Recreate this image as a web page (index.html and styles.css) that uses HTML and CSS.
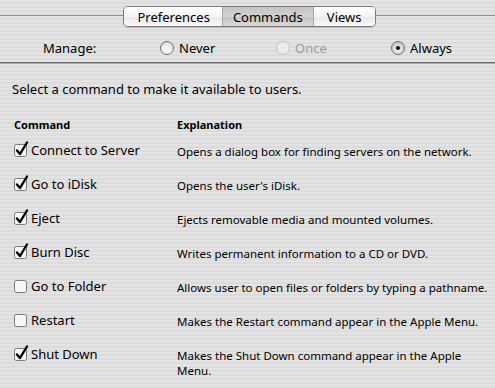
FILE: index.html
```html
<!DOCTYPE html>
<html lang="en">
<head>
    <meta charset="UTF-8">
    <title>Commands</title>
    <link rel="stylesheet" href="styles.css">
</head>
<body>
    <div class="top">
        <div class="tabs">
            <span class="tab">Preferences</span>
            <span class="tab on">Commands</span>
            <span class="tab">Views</span>
        </div>
    </div>
    <div class="manage">
        <span class="lbl">Manage:</span>
        <span class="radio r1"><i class="dot"></i>Never</span>
        <span class="radio r2 off"><i class="dot"></i>Once</span>
        <span class="radio r3 sel"><i class="dot"></i>Always</span>
    </div>
    <div class="sep"></div>

    <p class="intro">Select a command to make it available to users.</p>

    <div class="list">
        <div class="head"><span>Command</span><span>Explanation</span></div>

        <div class="row"><label class="cmd"><svg class="cb" viewBox="0 0 16 16"><rect x="1.5" y="3.5" width="12" height="12" rx="2"/><path class="ck" d="M4 9.5 L7 13 L14 1.5"/></svg>Connect to Server</label><span class="exp">Opens a dialog box for finding servers on the network.</span></div>
        <div class="row"><label class="cmd"><svg class="cb" viewBox="0 0 16 16"><rect x="1.5" y="3.5" width="12" height="12" rx="2"/><path class="ck" d="M4 9.5 L7 13 L14 1.5"/></svg>Go to iDisk</label><span class="exp">Opens the user's iDisk.</span></div>
        <div class="row"><label class="cmd"><svg class="cb" viewBox="0 0 16 16"><rect x="1.5" y="3.5" width="12" height="12" rx="2"/><path class="ck" d="M4 9.5 L7 13 L14 1.5"/></svg>Eject</label><span class="exp">Ejects removable media and mounted volumes.</span></div>
        <div class="row"><label class="cmd"><svg class="cb" viewBox="0 0 16 16"><rect x="1.5" y="3.5" width="12" height="12" rx="2"/><path class="ck" d="M4 9.5 L7 13 L14 1.5"/></svg>Burn Disc</label><span class="exp">Writes permanent information to a CD or DVD.</span></div>
        <div class="row"><label class="cmd"><svg class="cb" viewBox="0 0 16 16"><rect x="1.5" y="3.5" width="12" height="12" rx="2"/></svg>Go to Folder</label><span class="exp">Allows user to open files or folders by typing a pathname.</span></div>
        <div class="row"><label class="cmd"><svg class="cb" viewBox="0 0 16 16"><rect x="1.5" y="3.5" width="12" height="12" rx="2"/></svg>Restart</label><span class="exp">Makes the Restart command appear in the Apple Menu.</span></div>
        <div class="row"><label class="cmd"><svg class="cb" viewBox="0 0 16 16"><rect x="1.5" y="3.5" width="12" height="12" rx="2"/><path class="ck" d="M4 9.5 L7 13 L14 1.5"/></svg>Shut Down</label><span class="exp">Makes the Shut Down command appear in the Apple Menu.</span></div>
    </div>
</body>
</html>
```

FILE: styles.css
```css
*{
    box-sizing: border-box;
}
body{
    margin: 0;
    width: 495px;
    height: 388px;
    overflow: hidden;
    font-family: "Noto Sans", "DejaVu Sans", sans-serif;
    color: #000;
    background-color: #e1e1e1;
    background-image: repeating-linear-gradient(#e3e3e3 0, #e3e3e3 2px, #dcdcdc 2px, #dcdcdc 4px);
}
.top{
    position: relative;
    height: 33px;
    display: flex;
    justify-content: center;
    padding-top: 6px;
}
.top:before{
    content: "";
    position: absolute;
    left: 0;
    right: 0;
    top: 15px;
    border-top: 1px solid #8e8e8e;
}
.tabs{
    position: relative;
    display: flex;
    height: 21px;
    margin-left: 4px;
    border: 1px solid #7b7b7b;
    border-radius: 5px;
    overflow: hidden;
    box-shadow: 0 1px 1px rgba(0,0,0,0.15);
}
.tab{
    display: flex;
    align-items: center;
    justify-content: center;
    font-size: 13px;
    padding: 0 13px;
    background: linear-gradient(#ffffff, #f4f4f4 50%, #e8e8e8 51%, #f8f8f8);
    border-left: 1px solid #a8a8a8;
}
.tab:first-child{
    border-left: 0;
    padding: 0 12px 0 13px;
}
.tab.on{
    background: linear-gradient(#c4c4c4, #d2d2d2 50%, #c2c2c2 51%, #dadada);
    padding: 0 10px;
}
.manage{
    position: relative;
    height: 30px;
    font-size: 13px;
}
.lbl, .radio{
    position: absolute;
    top: 6px;
    display: flex;
    align-items: center;
}
.lbl{ left: 43px; }
.r1{ left: 160px; }
.r2{ left: 276px; color: #9a9a9a; }
.r3{ left: 391px; }
.dot{
    width: 14px;
    height: 14px;
    margin-right: 5px;
    border-radius: 50%;
    border: 1px solid #6f6f6f;
    background: radial-gradient(circle at 50% 70%, #ffffff, #e6e6e6 60%, #bdbdbd);
    display: flex;
    align-items: center;
    justify-content: center;
}
.off .dot{
    border-color: #c2c2c2;
    background: #ececec;
}
.sel .dot{
    background: radial-gradient(circle at 50% 65%, #f4f4f4, #c9c9c9 70%, #9d9d9d);
}
.sel .dot:after{
    content: "";
    width: 4px;
    height: 4px;
    border-radius: 50%;
    background: #111;
}
.sep{
    height: 2px;
    background: #6d6d6d;
    border-bottom: 1px solid #a8a8a8;
    margin-top: -1px;
}
.intro{
    margin: 17px 0 0 12px;
    font-size: 13px;
    line-height: 17px;
}
.list{
    margin: 20px 0 0 14px;
}
.head{
    display: flex;
    font-size: 11px;
    font-weight: bold;
    line-height: 14px;
    height: 24px;
}
.head span:first-child, .cmd{
    width: 163px;
    flex-shrink: 0;
}
.row{
    display: flex;
    align-items: flex-start;
    height: 34px;
}
.cmd{
    display: flex;
    align-items: center;
    font-size: 13px;
    line-height: 17px;
}
.cb{
    width: 16px;
    height: 16px;
    margin: -3px 2px 0 -1px;
    overflow: visible;
}
.cb rect{
    fill: #f6f6f6;
    stroke: #7a7a7a;
    stroke-width: 1;
}
.cb .ck{
    fill: none;
    stroke: #000;
    stroke-width: 2.4;
    stroke-linejoin: round;
    stroke-linecap: round;
}
.exp{
    font-size: 11.5px;
    line-height: 15px;
    padding-top: 2px;
    width: 312px;
}
```
